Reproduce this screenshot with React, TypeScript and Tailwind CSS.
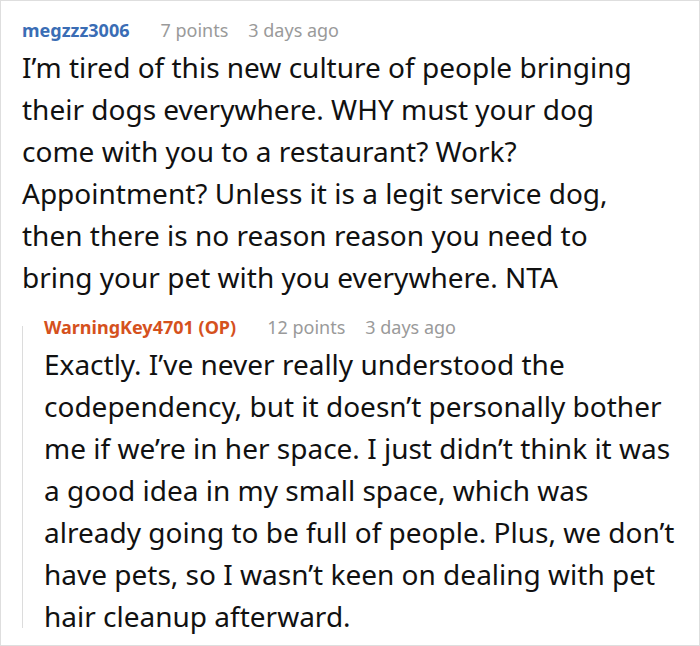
const font = { fontFamily: '"Noto Sans", "Open Sans", sans-serif' }

type Meta = { user: string; op?: boolean; points: string; when: string }

function CommentHead({ user, op, points, when }: Meta) {
  return (
    <div className="flex items-baseline h-[30px] text-[18px] leading-[30px]">
      <span className={`font-bold mr-[31px] ${op ? 'text-[#d5511d]' : 'text-[#3a6db5]'}`}>
        {user}{op ? ' (OP)' : ''}
      </span>
      <span className="text-[#9a9a9a] mr-[20px]">{points}</span>
      <span className="text-[#9a9a9a]">{when}</span>
    </div>
  )
}

export default function App() {
  return (
    <div className="w-[700px] h-[646px] bg-white border border-[#dedede] pl-[21px] pr-[21px] pt-[14px]" style={font}>
      {/* top level comment */}
      <CommentHead user="megzzz3006" points="7 points" when="3 days ago" />
      <p className="mt-px pr-[30px] text-[28px] leading-[42px] text-[#111]">
        I’m tired of this new culture of people bringing their dogs everywhere. WHY must your dog come with you to a restaurant? Work? Appointment? Unless it is a legit service dog, then there is no reason reason you need to bring your pet with you everywhere. NTA
      </p>

      {/* reply */}
      <div className="flex mt-[14px]">
        <div className="w-px bg-[#dcdcdc] mt-[14px] mb-[9px] shrink-0" />
        <div className="pl-[21px] -mr-[10px]">
          <CommentHead user="WarningKey4701" op points="12 points" when="3 days ago" />
          <p className="mt-px text-[28px] leading-[42px] text-[#111]">
            Exactly. I’ve never really understood the codependency, but it doesn’t personally bother me if we’re in her space. I just didn’t think it was a good idea in my small space, which was already going to be full of people. Plus, we don’t have pets, so I wasn’t keen on dealing with pet hair cleanup afterward.
          </p>
        </div>
      </div>
    </div>
  )
}
